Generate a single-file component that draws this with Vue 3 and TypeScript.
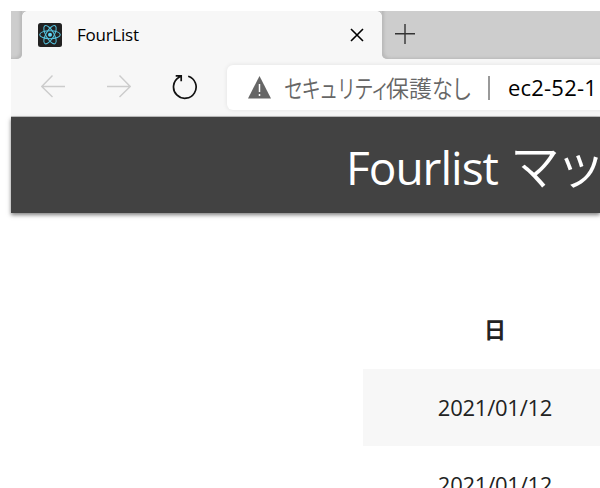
<script setup lang="ts">
const orbits: number[] = [0, 60, 120]
const dates: string[] = ['2021/01/12', '2021/01/12']
</script>

<template>
  <main class="window">
    <header class="tabs">
      <div class="previous-tab"></div>
      <div class="tab">
        <svg class="favicon" viewBox="0 0 24 24">
          <rect width="24" height="24" rx="2.5" fill="#222" />
          <g fill="none" stroke="#55c4df" stroke-width="1.05">
            <ellipse v-for="angle in orbits" :key="angle" cx="12" cy="11.7" rx="10.3" ry="4" :transform="`rotate(${angle} 12 11.7)`" />
          </g>
          <circle cx="12" cy="11.7" r="2" fill="#61dafb" />
        </svg>
        <span class="tab-name">FourList</span>
        <svg class="close" viewBox="0 0 14 14"><path d="M1 1L13 13M13 1L1 13" fill="none" stroke="#000" stroke-width="1.6" /></svg>
      </div>
      <div class="new-tab">
        <svg viewBox="0 0 20 20"><path d="M0 9.7H20M10 0V20" fill="none" stroke="#333" stroke-width="1.4" /></svg>
      </div>
    </header>
    <nav class="toolbar">
      <svg class="arrow" viewBox="0 0 24 24"><path d="M24 12.5H1M11.5 1.5L.8 12.5L11.5 23" /></svg>
      <svg class="arrow forward" viewBox="0 0 24 24"><path d="M0 12.5H23M12.5 1.5L23.2 12.5L12.5 23" /></svg>
      <svg class="reload" viewBox="0 0 26 26"><path d="M16.2 2.2A11.3 11.3 0 1 1 7 3.3L9.2 1.9M3.7 1.9H9.2V7.2" /></svg>
      <div class="address">
        <svg class="warning" viewBox="0 0 23 23">
          <path d="M11.5 0L23 22.5H0Z" fill="#666" />
          <path d="M11.5 8V16M11.5 18V20" stroke="#fff" stroke-width="1.5" />
        </svg>
        <span class="security"><span class="kana">セキュリティ</span><span class="kanji">保護</span><span class="kana tail">なし</span></span>
        <span class="divider"></span>
        <span class="url">ec2-52-1</span>
      </div>
    </nav>
    <div class="app-header"><h1><span class="brand">Fourlist</span><span class="ma">マ</span><span class="tsu">ッ</span></h1></div>
    <section class="table">
      <div class="heading">日</div>
      <div v-for="(date, index) in dates" :key="index" class="row"><span>{{ date }}</span></div>
    </section>
  </main>
</template>

<style>
html, body { margin: 0; background: #fff; overflow: hidden; }
</style>

<style scoped>
.window {
  box-sizing: border-box;
  width: 600px;
  height: 488px;
  padding: 11px 0 0 11px;
  overflow: hidden;
  font-family: "Open Sans", "Noto Sans CJK JP", sans-serif;
  color: #222;
}
svg { display: block; flex: none; }
.tabs { display: flex; height: 48px; background: #f7f7f7; }
.previous-tab { width: 11px; background: #cdcdcd; border-radius: 0 0 5px 0; box-shadow: inset -3px -2px 3px -1px #b9b9b9; }
.tab {
  box-sizing: border-box;
  display: flex;
  align-items: center;
  width: 360px;
  padding: 0 18px 0 16px;
  background: #f7f7f7;
  position: relative;
  border-radius: 5px 5px 0 0;
}
.tab::before, .tab::after {
  content: "";
  position: absolute;
  top: 0;
  width: 5px;
  height: 5px;
}
.tab::before { left: 0; background: radial-gradient(circle at 100% 100%, transparent 4.5px, #c5c5c5 5px); }
.tab::after { right: 0; background: radial-gradient(circle at 0 100%, transparent 4.5px, #c5c5c5 5px); }
.favicon { width: 24px; height: 24px; }
.tab-name { flex: 1; margin-left: 15px; color: #000; font-size: 17px; letter-spacing: -.25px; line-height: 24px; }
.close { width: 14px; height: 14px; }
.new-tab { flex: 1; padding: 13px 0 0 13px; background: #cdcdcd; border-radius: 0 0 0 5px; box-shadow: inset 3px -2px 3px -1px #b9b9b9; }
.new-tab svg { width: 20px; height: 20px; }
.toolbar { box-sizing: border-box; display: flex; height: 58px; padding: 6px 0 6px 30px; background: #f7f7f7; border-bottom: 1px solid #c3c3c3; }
.arrow { width: 24px; height: 24px; margin-top: 9px; fill: none; stroke: #ccc; stroke-width: 1.4; }
.forward { margin-left: 42px; }
.reload { width: 26px; height: 26px; margin: 9px 0 0 41px; fill: none; stroke: #111; stroke-width: 1.7; }
.address {
  box-sizing: border-box;
  display: flex;
  align-items: center;
  width: 400px;
  height: 45px;
  margin-left: 29px;
  padding-left: 21px;
  flex: none;
  background: #fff;
  border-radius: 6px;
  box-shadow: 0 0 5px rgba(0, 0, 0, .09);
}
.warning { width: 23px; height: 23px; }
.security { display: flex; width: 191px; margin: 0 0 2px 13px; font-family: "Noto Sans CJK JP", sans-serif; font-size: 23px; font-weight: 350; line-height: 34px; color: #666; white-space: nowrap; }
.kana { width: 102px; font-size: 25px; letter-spacing: -2.2px; transform: scaleX(.77); transform-origin: 0 50%; }
.kanji { width: 46px; }
.tail { width: 41px; transform: scaleX(.84); }
.divider { width: 2px; height: 24px; margin-left: 13px; background: #999; }
.url { margin: 0 0 1px 18px; color: #000; font-size: 22px; letter-spacing: .2px; white-space: nowrap; }
.app-header { height: 96px; position: relative; background: #424242; box-shadow: 0 2px 4px rgba(0, 0, 0, .5); }
h1 { display: flex; margin: 0; padding: 18px 0 0 335px; color: #fff; font-size: 46px; font-weight: 400; line-height: 64px; white-space: nowrap; }
.brand, .ma, .tsu { flex: none; }
.brand { width: 164px; letter-spacing: -1px; }
.ma { width: 45px; font-size: 50px; font-weight: 350; line-height: 62px; }
.tsu { font-size: 51px; font-weight: 350; line-height: 58px; }
.table { box-sizing: border-box; width: 264px; margin: 79px 0 0 352px; }
.heading { height: 77px; font-size: 22px; font-weight: 700; line-height: 74px; text-align: center; }
.row { height: 77px; font-size: 22px; line-height: 77px; text-align: center; letter-spacing: -.25px; }
.row:nth-child(even) { background: #f7f7f7; }
</style>
